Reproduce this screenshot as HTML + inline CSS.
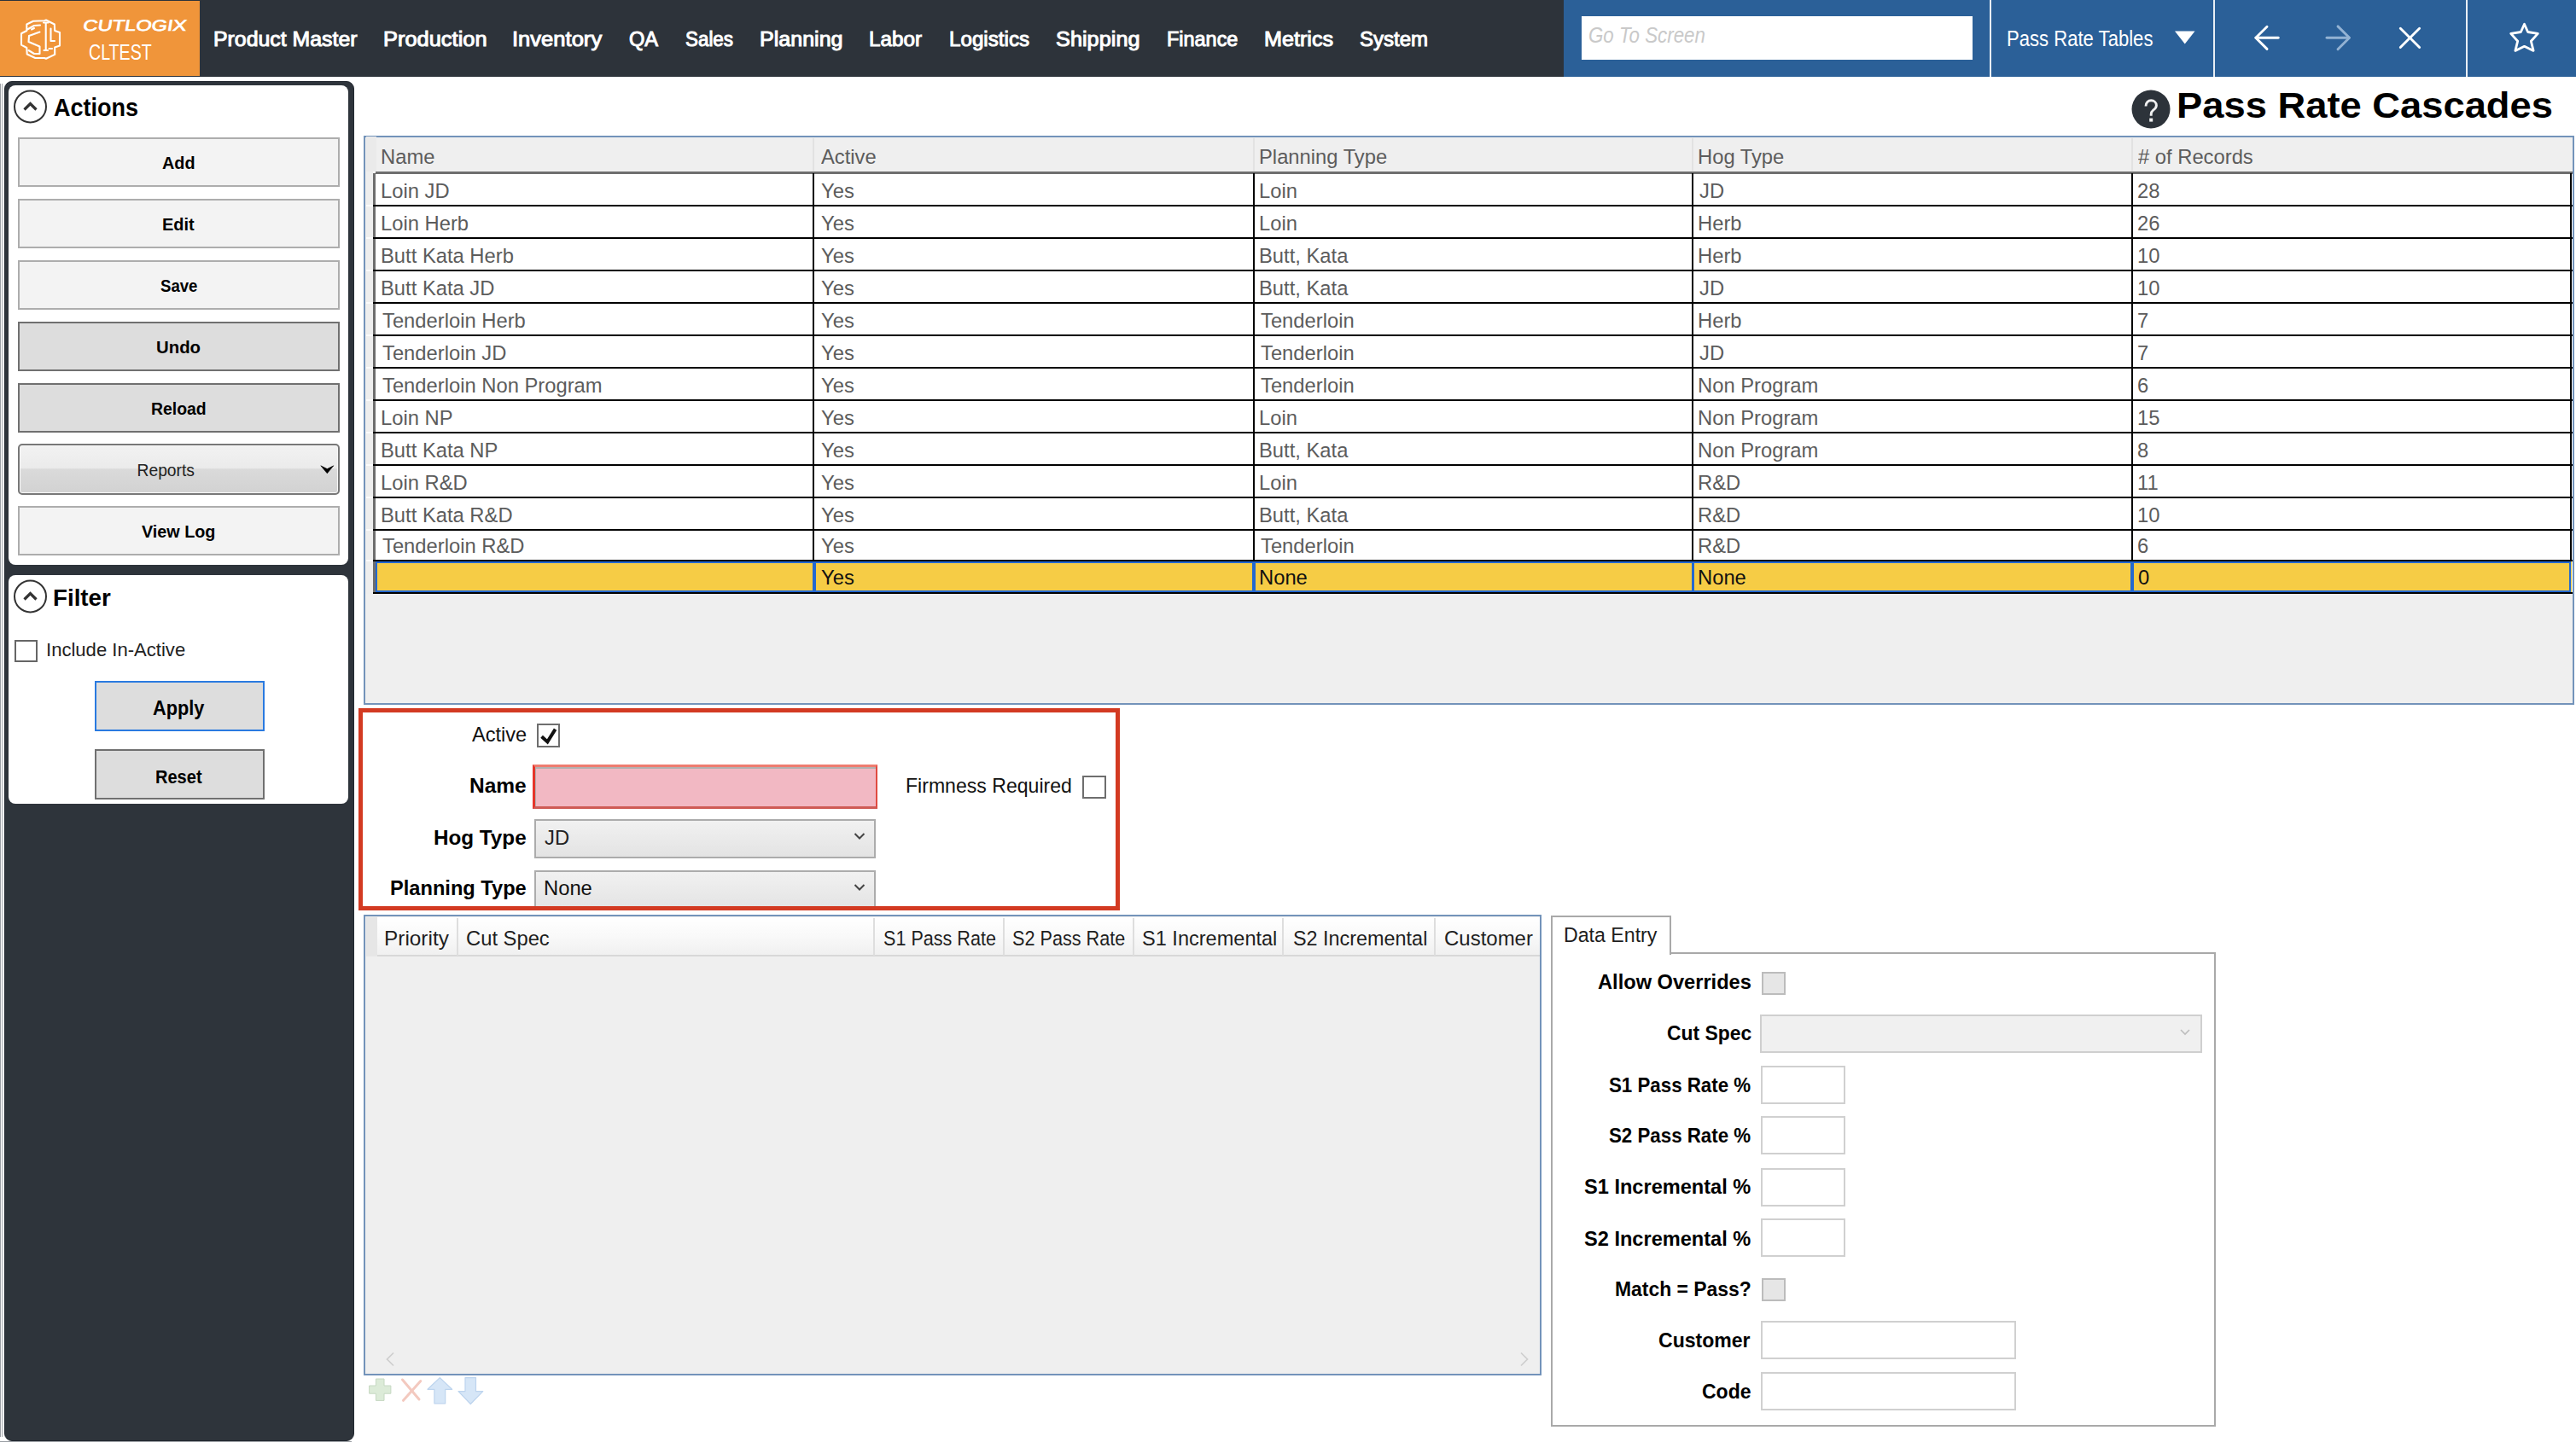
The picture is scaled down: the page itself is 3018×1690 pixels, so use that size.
<!DOCTYPE html>
<html><head><meta charset="utf-8"><style>
html,body{margin:0;padding:0;}
body{width:3018px;height:1690px;overflow:hidden;position:relative;background:#fff;font-family:"Liberation Sans", sans-serif;}
.a{position:absolute;box-sizing:border-box;}
.t{position:absolute;white-space:nowrap;line-height:1;transform-origin:0 0;}
</style></head><body>
<!-- window left lines -->
<div class="a" style="left:0;top:98px;width:1px;height:1586px;background:#9a9ea3"></div>
<div class="a" style="left:2px;top:98px;width:1px;height:1586px;background:#a4a8ad"></div>
<div class="a" style="left:0;top:1689px;width:412px;height:1px;background:#9a9ea3"></div>

<!-- NAV -->
<div class="a" style="left:0;top:0;width:3018px;height:90px;background:#2d333a"></div>
<div class="a" style="left:0;top:1px;width:234.3px;height:88px;background:#f0953a"></div>
<div class="a" style="left:1832px;top:0;width:1186px;height:90px;background:#2b6098"></div>
<div class="a" style="left:2331px;top:0;width:2px;height:90px;background:#e8eef5"></div>
<div class="a" style="left:2593px;top:0;width:2px;height:90px;background:#e8eef5"></div>
<div class="a" style="left:2889px;top:0;width:2px;height:90px;background:#e8eef5"></div>
<div class="a" style="left:1853px;top:19px;width:458px;height:51px;background:#fff"></div>
<!-- SIDEBAR -->
<div class="a" style="left:4.5px;top:94.5px;width:410px;height:1594px;background:#2e343b;border:1px solid #222830;border-radius:9px"></div>
<div class="a" style="left:10px;top:100px;width:398px;height:562px;background:#fff;border-radius:8px"></div>
<div class="a" style="left:10px;top:674px;width:398px;height:268px;background:#fff;border-radius:8px"></div>
<svg class="a" style="left:15px;top:105px" width="42" height="42" viewBox="0 0 42 42"><circle cx="20.5" cy="20" r="18.5" fill="none" stroke="#333" stroke-width="2"/><path d="M13.5 23.5 L20.5 16.5 L27.5 23.5" fill="none" stroke="#333" stroke-width="3.2"/></svg>
<svg class="a" style="left:15px;top:679px" width="42" height="42" viewBox="0 0 42 42"><circle cx="20.5" cy="20" r="18.5" fill="none" stroke="#333" stroke-width="2"/><path d="M13.5 23.5 L20.5 16.5 L27.5 23.5" fill="none" stroke="#333" stroke-width="3.2"/></svg>
<div class="a" style="left:21px;top:161px;width:377px;height:58px;background:#f3f3f3;border:2px solid #adadad"></div>
<div class="a" style="left:21px;top:233px;width:377px;height:58px;background:#f3f3f3;border:2px solid #adadad"></div>
<div class="a" style="left:21px;top:305px;width:377px;height:58px;background:#f3f3f3;border:2px solid #adadad"></div>
<div class="a" style="left:21px;top:377px;width:377px;height:58px;background:#dddddd;border:2px solid #707070"></div>
<div class="a" style="left:21px;top:449px;width:377px;height:58px;background:#dddddd;border:2px solid #707070"></div>
<div class="a" style="left:21px;top:520px;width:377px;height:60px;background:linear-gradient(#f2f2f2 0%,#ebebeb 47%,#dadada 50%,#d2d2d2 100%);border:2px solid #787878;border-radius:5px;box-shadow:inset 0 0 0 1px #f8f8f8"></div>
<svg class="a" style="left:374px;top:543px" width="18" height="14" viewBox="0 0 18 14"><path d="M1.8 2.8 L9.3 6.6 L16.8 2.8 L9.3 11.8 Z" fill="#000" stroke="#000" stroke-width="0.6" stroke-linejoin="miter"/></svg>
<div class="a" style="left:21px;top:593px;width:377px;height:58px;background:#f3f3f3;border:2px solid #adadad"></div>
<div class="a" style="left:17px;top:750px;width:27px;height:26px;background:#fff;border:2px solid #666"></div>
<div class="a" style="left:111px;top:798px;width:199px;height:59px;background:#dddddd;border:2px solid #2a7ae0"></div>
<div class="a" style="left:111px;top:878px;width:199px;height:59px;background:#dddddd;border:2px solid #707070"></div>

<!-- TITLE help -->
<svg class="a" style="left:2497px;top:105px" width="46" height="46" viewBox="0 0 46 46"><circle cx="23" cy="23" r="22.5" fill="#2d333a"/><path d="M17 19.5 C17 15.3 19.8 12.8 23.2 12.8 C26.8 12.8 29.4 15.3 29.4 18.5 C29.4 21.7 27.3 22.9 25.4 24.3 C23.8 25.5 23.2 26.6 23.2 29 L23.2 30.8" fill="none" stroke="#f0f0f0" stroke-width="2.9" stroke-linecap="butt"/><rect x="21.2" y="33.6" width="4" height="4" fill="#f0f0f0"/></svg>
<!-- UPPER GRID -->
<div class="a" style="left:426px;top:158.5px;width:2589.5px;height:667px;background:#efefef;border:2px solid #7393ba"></div>
<div class="a" style="left:428.5px;top:160px;width:12px;height:42px;background:#eaeaea"></div>
<div class="a" style="left:952px;top:162px;width:2px;height:38px;background:#e2e2e2"></div>
<div class="a" style="left:1468px;top:162px;width:2px;height:38px;background:#e2e2e2"></div>
<div class="a" style="left:1982px;top:162px;width:2px;height:38px;background:#e2e2e2"></div>
<div class="a" style="left:2497px;top:162px;width:2px;height:38px;background:#e2e2e2"></div>
<!-- rows block -->
<div class="a" style="left:437px;top:201px;width:2577px;height:495px;background:#fff"></div>
<div class="a" style="left:428px;top:201px;width:9px;height:495px;background:#eeeeee"></div>
<div class="a" style="left:440px;top:201px;width:2574px;height:3px;background:#6e6e6e"></div>
<div class="a" style="left:437px;top:203px;width:3px;height:493px;background:#6e6e6e"></div>
<div class="a" style="left:437px;top:240px;width:2577px;height:2px;background:#000"></div>
<div class="a" style="left:429px;top:240px;width:8px;height:2px;background:#fbfbfb"></div>
<div class="a" style="left:437px;top:278px;width:2577px;height:2px;background:#000"></div>
<div class="a" style="left:429px;top:278px;width:8px;height:2px;background:#fbfbfb"></div>
<div class="a" style="left:437px;top:316px;width:2577px;height:2px;background:#000"></div>
<div class="a" style="left:429px;top:316px;width:8px;height:2px;background:#fbfbfb"></div>
<div class="a" style="left:437px;top:354px;width:2577px;height:2px;background:#000"></div>
<div class="a" style="left:429px;top:354px;width:8px;height:2px;background:#fbfbfb"></div>
<div class="a" style="left:437px;top:392px;width:2577px;height:2px;background:#000"></div>
<div class="a" style="left:429px;top:392px;width:8px;height:2px;background:#fbfbfb"></div>
<div class="a" style="left:437px;top:430px;width:2577px;height:2px;background:#000"></div>
<div class="a" style="left:429px;top:430px;width:8px;height:2px;background:#fbfbfb"></div>
<div class="a" style="left:437px;top:468px;width:2577px;height:2px;background:#000"></div>
<div class="a" style="left:429px;top:468px;width:8px;height:2px;background:#fbfbfb"></div>
<div class="a" style="left:437px;top:506px;width:2577px;height:2px;background:#000"></div>
<div class="a" style="left:429px;top:506px;width:8px;height:2px;background:#fbfbfb"></div>
<div class="a" style="left:437px;top:544px;width:2577px;height:2px;background:#000"></div>
<div class="a" style="left:429px;top:544px;width:8px;height:2px;background:#fbfbfb"></div>
<div class="a" style="left:437px;top:582px;width:2577px;height:2px;background:#000"></div>
<div class="a" style="left:429px;top:582px;width:8px;height:2px;background:#fbfbfb"></div>
<div class="a" style="left:437px;top:620px;width:2577px;height:2px;background:#000"></div>
<div class="a" style="left:429px;top:620px;width:8px;height:2px;background:#fbfbfb"></div>
<div class="a" style="left:437px;top:656px;width:2577px;height:2px;background:#000"></div>
<div class="a" style="left:429px;top:656px;width:8px;height:2px;background:#fbfbfb"></div>
<div class="a" style="left:952px;top:203px;width:2px;height:493px;background:#000"></div>
<div class="a" style="left:1468px;top:203px;width:2px;height:493px;background:#000"></div>
<div class="a" style="left:1982px;top:203px;width:2px;height:493px;background:#000"></div>
<div class="a" style="left:2497px;top:203px;width:2px;height:493px;background:#000"></div>
<div class="a" style="left:3011px;top:203px;width:2px;height:493px;background:#000"></div>
<!-- yellow row -->
<div class="a" style="left:440px;top:658px;width:2573px;height:37px;background:#f6cc45"></div>
<div class="a" style="left:440px;top:658px;width:514px;height:36px;border:2px solid #2468d0"></div>
<div class="a" style="left:954px;top:658px;width:515px;height:36px;border:2px solid #2468d0"></div>
<div class="a" style="left:1469px;top:658px;width:515px;height:36px;border:2px solid #2468d0"></div>
<div class="a" style="left:1983px;top:658px;width:515px;height:36px;border:2px solid #2468d0"></div>
<div class="a" style="left:2498px;top:658px;width:514px;height:36px;border:2px solid #2468d0"></div>
<div class="a" style="left:437px;top:694px;width:2577px;height:2px;background:#000"></div>

<!-- FORM red box -->
<div class="a" style="left:420px;top:830px;width:892px;height:237px;border:5px solid #d33a22;background:#fff"></div>
<div class="a" style="left:628.5px;top:848px;width:27.5px;height:27.5px;background:#fff;border:2px solid #6e6e6e"></div>
<svg class="a" style="left:630px;top:850px" width="25" height="25" viewBox="0 0 25 25"><path d="M4.6 13.2 L11.4 19.4 L20.6 4.6" fill="none" stroke="#111" stroke-width="3.9" stroke-linejoin="miter" stroke-miterlimit="3"/></svg>
<div class="a" style="left:624px;top:896px;width:404px;height:51.5px;background:#f2b8c3;border-style:solid;border-width:3.5px 2.5px 3.5px 3px;border-color:#ee7c70 #e04a40 #cf5b56 #e5352a;box-shadow:inset 1px 2px 0 #b3b0b0"></div>
<div class="a" style="left:626px;top:960px;width:400px;height:46px;background:linear-gradient(#f1f1f1,#e3e3e3);border:2px solid #acacac"></div>
<svg class="a" style="left:999px;top:974px" width="16" height="12" viewBox="0 0 16 12"><path d="M2.5 3 L8 8.5 L13.5 3" fill="none" stroke="#444" stroke-width="2"/></svg>
<div class="a" style="left:626px;top:1020px;width:400px;height:46px;background:linear-gradient(#f1f1f1,#e3e3e3);border:2px solid #acacac;border-bottom:none"></div>
<svg class="a" style="left:999px;top:1034px" width="16" height="12" viewBox="0 0 16 12"><path d="M2.5 3 L8 8.5 L13.5 3" fill="none" stroke="#444" stroke-width="2"/></svg>
<div class="a" style="left:420px;top:1062px;width:892px;height:5px;background:#d33a22"></div>
<div class="a" style="left:1268px;top:908.5px;width:28px;height:27px;background:#fff;border:2px solid #6e6e6e"></div>

<!-- LOWER GRID -->
<div class="a" style="left:426px;top:1072px;width:1379.5px;height:539.5px;background:#efefef;border:2px solid #7393ba"></div>
<div class="a" style="left:428.5px;top:1074.5px;width:1375px;height:46px;background:linear-gradient(#ffffff 0%,#f9f9f9 50%,#f0f0f0 100%);border-bottom:2px solid #d8d8d8"></div>
<div class="a" style="left:428.5px;top:1074.5px;width:13px;height:46px;background:#e6e6e6"></div>
<div class="a" style="left:535px;top:1076px;width:2px;height:44px;background:#dedede"></div>
<div class="a" style="left:1023px;top:1076px;width:2px;height:44px;background:#dedede"></div>
<div class="a" style="left:1175px;top:1076px;width:2px;height:44px;background:#dedede"></div>
<div class="a" style="left:1327px;top:1076px;width:2px;height:44px;background:#dedede"></div>
<div class="a" style="left:1502px;top:1076px;width:2px;height:44px;background:#dedede"></div>
<div class="a" style="left:1680px;top:1076px;width:2px;height:44px;background:#dedede"></div>
<svg class="a" style="left:449px;top:1583px" width="16" height="20" viewBox="0 0 16 20"><path d="M12 2.5 L4.5 10 L12 17.5" fill="none" stroke="#cecece" stroke-width="1.7"/></svg>
<svg class="a" style="left:1778px;top:1583px" width="16" height="20" viewBox="0 0 16 20"><path d="M4 2.5 L11.5 10 L4 17.5" fill="none" stroke="#cecece" stroke-width="1.7"/></svg>
<!-- DATA ENTRY TAB -->
<div class="a" style="left:1816.5px;top:1116px;width:779px;height:556px;border:2px solid #a9a9a9;background:#fff"></div>
<div class="a" style="left:1816.5px;top:1072.5px;width:141px;height:46px;border:2px solid #a9a9a9;border-bottom:none;background:#fff"></div>
<div class="a" style="left:2064px;top:1138.5px;width:28px;height:27px;background:#e6e6e6;border:2px solid #bcbcbc"></div>
<div class="a" style="left:2062px;top:1188.5px;width:518px;height:45px;background:#f0f0f0;border:2px solid #cfcfcf"></div>
<svg class="a" style="left:2552px;top:1204px" width="16" height="12" viewBox="0 0 16 12"><path d="M3 3 L8 8 L13 3" fill="none" stroke="#bdbdbd" stroke-width="1.6"/></svg>
<div class="a" style="left:2062.5px;top:1248.5px;width:99px;height:45px;background:#fff;border:2px solid #d0d0d0"></div>
<div class="a" style="left:2062.5px;top:1308px;width:99px;height:45px;background:#fff;border:2px solid #d0d0d0"></div>
<div class="a" style="left:2062.5px;top:1368.5px;width:99px;height:45px;background:#fff;border:2px solid #d0d0d0"></div>
<div class="a" style="left:2062.5px;top:1428px;width:99px;height:45px;background:#fff;border:2px solid #d0d0d0"></div>
<div class="a" style="left:2064px;top:1498px;width:28px;height:27px;background:#e6e6e6;border:2px solid #bcbcbc"></div>
<div class="a" style="left:2062.5px;top:1548px;width:299px;height:45px;background:#fff;border:2px solid #d0d0d0"></div>
<div class="a" style="left:2062.5px;top:1608px;width:299px;height:45px;background:#fff;border:2px solid #d0d0d0"></div>

<!-- ICON OVERLAY -->
<svg class="a" style="left:0;top:0" width="3018" height="1690" viewBox="0 0 3018 1690">
  <!-- logo brain (local 60x60 at 18,16) -->
  <g transform="translate(18,16)" fill="none" stroke="#fff" stroke-width="2.1" stroke-linejoin="round" stroke-linecap="round">
    <path d="M21 8.7 L34 8.2 L36 7.5 L45.8 12.5 L46.2 20 L52 22 L52 37.5 L46.2 39.5 L46.2 47.9 L36 52.8 L34 52 L23.3 52 L13.7 47.5 L13.3 40 L7 36.6 L7 23.3 L13.3 20 L13.3 12.5 Z"/>
    <path d="M14 18.5 L22 14 L29 13.5"/>
    <path d="M28.5 21.5 L16 26 L15.5 33 L28.5 38.5 L28.5 47 L22 47 L15.5 43"/>
    <path d="M22 17 L19 18.5"/>
    <path d="M33 10.5 L38.5 10.5 M35.7 10.5 L35.7 43 M33.5 43 L38 43"/>
    <path d="M41.5 17.5 L41.5 32 L46 32"/>
    <path d="M39.5 41 L43 41"/>
  </g>
  <!-- nav triangle -->
  <path d="M2548 36.5 L2571.5 36.5 L2559.75 51.5 Z" fill="#fff"/>
  <!-- back arrow -->
  <g fill="none" stroke="#fff" stroke-width="2.9" stroke-linecap="round" stroke-linejoin="round">
    <path d="M2656 31.3 L2642.8 44.3 L2656 57.4"/><path d="M2643 44.3 L2669.2 44.3"/>
  </g>
  <g fill="none" stroke="#93b2d3" stroke-width="2.9" stroke-linecap="round" stroke-linejoin="round">
    <path d="M2739 30.9 L2752.5 44.3 L2739 57.8"/><path d="M2752 44.3 L2726 44.3"/>
  </g>
  <g fill="none" stroke="#fff" stroke-width="2.9" stroke-linecap="round">
    <path d="M2812.3 33.2 L2834.6 55.5"/><path d="M2834.6 33.2 L2812.3 55.5"/>
  </g>
  <path d="M2957.5 28.2 L2961.6 37.5 L2973.3 39.4 L2965.3 48.2 L2968.1 59.4 L2957.5 54.3 L2946.9 59.4 L2949.7 48.2 L2941.7 39.4 L2953.4 37.5 Z" fill="none" stroke="#fff" stroke-width="2.8" stroke-linejoin="round"/>
  <!-- toolbar icons -->
  <path d="M440.4 1616 L450 1616 L450 1624 L457.9 1624 L457.9 1633.2 L450 1633.2 L450 1641.4 L440.4 1641.4 L440.4 1633.2 L432.6 1633.2 L432.6 1624 L440.4 1624 Z" fill="#dcebd8" stroke="#c6d8c2" stroke-width="1"/>
  <g fill="none" stroke="#f3c9bf" stroke-width="3" stroke-linecap="round">
    <path d="M471.5 1617 L491 1640"/><path d="M492.8 1618.6 L472.5 1641.3"/>
  </g>
  <path d="M515.3 1614.6 L529.6 1628.3 L521.7 1628.3 L521.7 1644.8 L508.9 1644.8 L508.9 1628.3 L501 1628.3 Z" fill="#d6e6f7" stroke="#bdd4ee" stroke-width="1.2" stroke-linejoin="round"/>
  <path d="M545 1614.6 L557.5 1614.6 L557.5 1630.6 L565.8 1630.6 L551.3 1645.5 L537 1630.6 L545 1630.6 Z" fill="#d6e6f7" stroke="#bdd4ee" stroke-width="1.2" stroke-linejoin="round"/>
</svg>

<div class="t" style="left:249.57px;top:33.85px;font-size:24.2px;color:#fff;transform:scaleX(1.0274);-webkit-text-stroke:1px #fff;">Product Master</div>
<div class="t" style="left:448.95px;top:33.85px;font-size:24.2px;color:#fff;transform:scaleX(1.0514);-webkit-text-stroke:1px #fff;">Production</div>
<div class="t" style="left:599.89px;top:33.85px;font-size:24.2px;color:#fff;transform:scaleX(1.0570);-webkit-text-stroke:1px #fff;">Inventory</div>
<div class="t" style="left:737.02px;top:33.85px;font-size:24.2px;color:#fff;transform:scaleX(0.9766);-webkit-text-stroke:1px #fff;">QA</div>
<div class="t" style="left:803.07px;top:33.85px;font-size:24.2px;color:#fff;transform:scaleX(0.9258);-webkit-text-stroke:1px #fff;">Sales</div>
<div class="t" style="left:889.96px;top:33.85px;font-size:24.2px;color:#fff;transform:scaleX(1.0361);-webkit-text-stroke:1px #fff;">Planning</div>
<div class="t" style="left:1018.00px;top:33.85px;font-size:24.2px;color:#fff;transform:scaleX(1.0032);-webkit-text-stroke:1px #fff;">Labor</div>
<div class="t" style="left:1112.00px;top:33.85px;font-size:24.2px;color:#fff;-webkit-text-stroke:1px #fff;">Logistics</div>
<div class="t" style="left:1236.95px;top:33.85px;font-size:24.2px;color:#fff;transform:scaleX(1.0470);-webkit-text-stroke:1px #fff;">Shipping</div>
<div class="t" style="left:1367.03px;top:33.85px;font-size:24.2px;color:#fff;transform:scaleX(0.9693);-webkit-text-stroke:1px #fff;">Finance</div>
<div class="t" style="left:1480.96px;top:33.85px;font-size:24.2px;color:#fff;transform:scaleX(1.0411);-webkit-text-stroke:1px #fff;">Metrics</div>
<div class="t" style="left:1593.01px;top:33.85px;font-size:24.2px;color:#fff;transform:scaleX(0.9937);-webkit-text-stroke:1px #fff;">System</div>
<div class="t" style="left:99.30px;top:20.90px;font-size:18px;color:#fff;transform:scaleX(1.3151) skewX(-7deg);-webkit-text-stroke:0.7px #fff;">CUTLOGIX</div>
<div class="t" style="left:104.25px;top:48.33px;font-size:26px;color:#fff;transform:scaleX(0.7536);">CLTEST</div>
<div class="t" style="left:1861.12px;top:28.84px;font-size:25.4px;color:#c9c9c9;font-style:italic;transform:scaleX(0.8789);">Go To Screen</div>
<div class="t" style="left:2350.76px;top:32.84px;font-size:25.4px;color:#fff;transform:scaleX(0.8697);">Pass Rate Tables</div>
<div class="t" style="left:63.40px;top:111.99px;font-size:29px;color:#000;font-weight:bold;transform:scaleX(0.9314);">Actions</div>
<div class="t" style="left:62.40px;top:686.80px;font-size:27.8px;color:#000;font-weight:bold;transform:scaleX(0.9979);">Filter</div>
<div class="t" style="left:190.00px;top:181.10px;font-size:20.6px;color:#000;font-weight:bold;transform:scaleX(0.9632);">Add</div>
<div class="t" style="left:190.43px;top:253.20px;font-size:20.6px;color:#000;font-weight:bold;transform:scaleX(0.9675);">Edit</div>
<div class="t" style="left:187.90px;top:325.40px;font-size:20.6px;color:#000;font-weight:bold;transform:scaleX(0.9026);">Save</div>
<div class="t" style="left:183.01px;top:397.30px;font-size:20.6px;color:#000;font-weight:bold;transform:scaleX(0.9896);">Undo</div>
<div class="t" style="left:176.56px;top:469.40px;font-size:20.6px;color:#000;font-weight:bold;transform:scaleX(0.9422);">Reload</div>
<div class="t" style="left:166.40px;top:612.50px;font-size:20.6px;color:#000;font-weight:bold;transform:scaleX(0.9604);">View Log</div>
<div class="t" style="left:160.50px;top:541.50px;font-size:19.3px;color:#222;">Reports</div>
<div class="t" style="left:53.78px;top:751.49px;font-size:21.8px;color:#222;transform:scaleX(1.0125);">Include In-Active</div>
<div class="t" style="left:179.00px;top:818.77px;font-size:23px;color:#000;font-weight:bold;transform:scaleX(0.9454);">Apply</div>
<div class="t" style="left:181.72px;top:899.12px;font-size:22.7px;color:#000;font-weight:bold;transform:scaleX(0.8834);">Reset</div>
<div class="t" style="left:2550.33px;top:103.33px;font-size:41.7px;color:#000;font-weight:bold;transform:scaleX(1.0873);">Pass Rate Cascades</div>
<div class="t" style="left:446.36px;top:171.60px;font-size:24.5px;color:#5c5c5c;transform:scaleX(0.9700);">Name</div>
<div class="t" style="left:962.10px;top:171.60px;font-size:24.5px;color:#5c5c5c;transform:scaleX(0.9700);">Active</div>
<div class="t" style="left:1474.86px;top:171.60px;font-size:24.5px;color:#5c5c5c;transform:scaleX(0.9700);">Planning Type</div>
<div class="t" style="left:1989.06px;top:171.60px;font-size:24.5px;color:#5c5c5c;transform:scaleX(0.9700);">Hog Type</div>
<div class="t" style="left:2505.40px;top:171.60px;font-size:24.5px;color:#5c5c5c;transform:scaleX(0.9700);"># of Records</div>
<div class="t" style="left:446.36px;top:211.60px;font-size:24.5px;color:#5c5c5c;transform:scaleX(0.9700);">Loin JD</div>
<div class="t" style="left:962.10px;top:211.60px;font-size:24.5px;color:#5c5c5c;transform:scaleX(0.9700);">Yes</div>
<div class="t" style="left:1474.86px;top:211.60px;font-size:24.5px;color:#5c5c5c;transform:scaleX(0.9700);">Loin</div>
<div class="t" style="left:1991.00px;top:211.60px;font-size:24.5px;color:#5c5c5c;transform:scaleX(0.9700);">JD</div>
<div class="t" style="left:2504.43px;top:211.60px;font-size:24.5px;color:#5c5c5c;transform:scaleX(0.9700);">28</div>
<div class="t" style="left:446.36px;top:249.60px;font-size:24.5px;color:#5c5c5c;transform:scaleX(0.9700);">Loin Herb</div>
<div class="t" style="left:962.10px;top:249.60px;font-size:24.5px;color:#5c5c5c;transform:scaleX(0.9700);">Yes</div>
<div class="t" style="left:1474.86px;top:249.60px;font-size:24.5px;color:#5c5c5c;transform:scaleX(0.9700);">Loin</div>
<div class="t" style="left:1989.06px;top:249.60px;font-size:24.5px;color:#5c5c5c;transform:scaleX(0.9700);">Herb</div>
<div class="t" style="left:2504.43px;top:249.60px;font-size:24.5px;color:#5c5c5c;transform:scaleX(0.9700);">26</div>
<div class="t" style="left:446.36px;top:287.60px;font-size:24.5px;color:#5c5c5c;transform:scaleX(0.9700);">Butt Kata Herb</div>
<div class="t" style="left:962.10px;top:287.60px;font-size:24.5px;color:#5c5c5c;transform:scaleX(0.9700);">Yes</div>
<div class="t" style="left:1474.86px;top:287.60px;font-size:24.5px;color:#5c5c5c;transform:scaleX(0.9700);">Butt, Kata</div>
<div class="t" style="left:1989.06px;top:287.60px;font-size:24.5px;color:#5c5c5c;transform:scaleX(0.9700);">Herb</div>
<div class="t" style="left:2504.43px;top:287.60px;font-size:24.5px;color:#5c5c5c;transform:scaleX(0.9700);">10</div>
<div class="t" style="left:446.36px;top:325.60px;font-size:24.5px;color:#5c5c5c;transform:scaleX(0.9700);">Butt Kata JD</div>
<div class="t" style="left:962.10px;top:325.60px;font-size:24.5px;color:#5c5c5c;transform:scaleX(0.9700);">Yes</div>
<div class="t" style="left:1474.86px;top:325.60px;font-size:24.5px;color:#5c5c5c;transform:scaleX(0.9700);">Butt, Kata</div>
<div class="t" style="left:1991.00px;top:325.60px;font-size:24.5px;color:#5c5c5c;transform:scaleX(0.9700);">JD</div>
<div class="t" style="left:2504.43px;top:325.60px;font-size:24.5px;color:#5c5c5c;transform:scaleX(0.9700);">10</div>
<div class="t" style="left:448.30px;top:363.60px;font-size:24.5px;color:#5c5c5c;transform:scaleX(0.9700);">Tenderloin Herb</div>
<div class="t" style="left:962.10px;top:363.60px;font-size:24.5px;color:#5c5c5c;transform:scaleX(0.9700);">Yes</div>
<div class="t" style="left:1476.80px;top:363.60px;font-size:24.5px;color:#5c5c5c;transform:scaleX(0.9700);">Tenderloin</div>
<div class="t" style="left:1989.06px;top:363.60px;font-size:24.5px;color:#5c5c5c;transform:scaleX(0.9700);">Herb</div>
<div class="t" style="left:2504.43px;top:363.60px;font-size:24.5px;color:#5c5c5c;transform:scaleX(0.9700);">7</div>
<div class="t" style="left:448.30px;top:401.60px;font-size:24.5px;color:#5c5c5c;transform:scaleX(0.9700);">Tenderloin JD</div>
<div class="t" style="left:962.10px;top:401.60px;font-size:24.5px;color:#5c5c5c;transform:scaleX(0.9700);">Yes</div>
<div class="t" style="left:1476.80px;top:401.60px;font-size:24.5px;color:#5c5c5c;transform:scaleX(0.9700);">Tenderloin</div>
<div class="t" style="left:1991.00px;top:401.60px;font-size:24.5px;color:#5c5c5c;transform:scaleX(0.9700);">JD</div>
<div class="t" style="left:2504.43px;top:401.60px;font-size:24.5px;color:#5c5c5c;transform:scaleX(0.9700);">7</div>
<div class="t" style="left:448.30px;top:439.60px;font-size:24.5px;color:#5c5c5c;transform:scaleX(0.9700);">Tenderloin Non Program</div>
<div class="t" style="left:962.10px;top:439.60px;font-size:24.5px;color:#5c5c5c;transform:scaleX(0.9700);">Yes</div>
<div class="t" style="left:1476.80px;top:439.60px;font-size:24.5px;color:#5c5c5c;transform:scaleX(0.9700);">Tenderloin</div>
<div class="t" style="left:1989.06px;top:439.60px;font-size:24.5px;color:#5c5c5c;transform:scaleX(0.9700);">Non Program</div>
<div class="t" style="left:2504.43px;top:439.60px;font-size:24.5px;color:#5c5c5c;transform:scaleX(0.9700);">6</div>
<div class="t" style="left:446.36px;top:477.60px;font-size:24.5px;color:#5c5c5c;transform:scaleX(0.9700);">Loin NP</div>
<div class="t" style="left:962.10px;top:477.60px;font-size:24.5px;color:#5c5c5c;transform:scaleX(0.9700);">Yes</div>
<div class="t" style="left:1474.86px;top:477.60px;font-size:24.5px;color:#5c5c5c;transform:scaleX(0.9700);">Loin</div>
<div class="t" style="left:1989.06px;top:477.60px;font-size:24.5px;color:#5c5c5c;transform:scaleX(0.9700);">Non Program</div>
<div class="t" style="left:2504.43px;top:477.60px;font-size:24.5px;color:#5c5c5c;transform:scaleX(0.9700);">15</div>
<div class="t" style="left:446.36px;top:515.60px;font-size:24.5px;color:#5c5c5c;transform:scaleX(0.9700);">Butt Kata NP</div>
<div class="t" style="left:962.10px;top:515.60px;font-size:24.5px;color:#5c5c5c;transform:scaleX(0.9700);">Yes</div>
<div class="t" style="left:1474.86px;top:515.60px;font-size:24.5px;color:#5c5c5c;transform:scaleX(0.9700);">Butt, Kata</div>
<div class="t" style="left:1989.06px;top:515.60px;font-size:24.5px;color:#5c5c5c;transform:scaleX(0.9700);">Non Program</div>
<div class="t" style="left:2504.43px;top:515.60px;font-size:24.5px;color:#5c5c5c;transform:scaleX(0.9700);">8</div>
<div class="t" style="left:446.36px;top:553.60px;font-size:24.5px;color:#5c5c5c;transform:scaleX(0.9700);">Loin R&amp;D</div>
<div class="t" style="left:962.10px;top:553.60px;font-size:24.5px;color:#5c5c5c;transform:scaleX(0.9700);">Yes</div>
<div class="t" style="left:1474.86px;top:553.60px;font-size:24.5px;color:#5c5c5c;transform:scaleX(0.9700);">Loin</div>
<div class="t" style="left:1989.06px;top:553.60px;font-size:24.5px;color:#5c5c5c;transform:scaleX(0.9700);">R&amp;D</div>
<div class="t" style="left:2504.43px;top:553.60px;font-size:24.5px;color:#5c5c5c;transform:scaleX(0.9700);">11</div>
<div class="t" style="left:446.36px;top:591.60px;font-size:24.5px;color:#5c5c5c;transform:scaleX(0.9700);">Butt Kata R&amp;D</div>
<div class="t" style="left:962.10px;top:591.60px;font-size:24.5px;color:#5c5c5c;transform:scaleX(0.9700);">Yes</div>
<div class="t" style="left:1474.86px;top:591.60px;font-size:24.5px;color:#5c5c5c;transform:scaleX(0.9700);">Butt, Kata</div>
<div class="t" style="left:1989.06px;top:591.60px;font-size:24.5px;color:#5c5c5c;transform:scaleX(0.9700);">R&amp;D</div>
<div class="t" style="left:2504.43px;top:591.60px;font-size:24.5px;color:#5c5c5c;transform:scaleX(0.9700);">10</div>
<div class="t" style="left:448.30px;top:627.60px;font-size:24.5px;color:#5c5c5c;transform:scaleX(0.9700);">Tenderloin R&amp;D</div>
<div class="t" style="left:962.10px;top:627.60px;font-size:24.5px;color:#5c5c5c;transform:scaleX(0.9700);">Yes</div>
<div class="t" style="left:1476.80px;top:627.60px;font-size:24.5px;color:#5c5c5c;transform:scaleX(0.9700);">Tenderloin</div>
<div class="t" style="left:1989.06px;top:627.60px;font-size:24.5px;color:#5c5c5c;transform:scaleX(0.9700);">R&amp;D</div>
<div class="t" style="left:2504.43px;top:627.60px;font-size:24.5px;color:#5c5c5c;transform:scaleX(0.9700);">6</div>
<div class="t" style="left:962.10px;top:665.00px;font-size:24.5px;color:#111;transform:scaleX(0.9700);">Yes</div>
<div class="t" style="left:1474.86px;top:665.00px;font-size:24.5px;color:#111;transform:scaleX(0.9700);">None</div>
<div class="t" style="left:1989.06px;top:665.00px;font-size:24.5px;color:#111;transform:scaleX(0.9700);">None</div>
<div class="t" style="left:2505.40px;top:665.00px;font-size:24.5px;color:#111;transform:scaleX(0.9700);">0</div>
<div class="t" style="left:552.60px;top:849.20px;font-size:24.5px;color:#111;transform:scaleX(0.9623);">Active</div>
<div class="t" style="left:550.00px;top:909.10px;font-size:24.5px;color:#000;font-weight:bold;">Name</div>
<div class="t" style="left:508.01px;top:969.60px;font-size:24.5px;color:#000;font-weight:bold;transform:scaleX(0.9892);">Hog Type</div>
<div class="t" style="left:456.84px;top:1029.00px;font-size:24.5px;color:#000;font-weight:bold;transform:scaleX(0.9647);">Planning Type</div>
<div class="t" style="left:1060.72px;top:909.00px;font-size:24.5px;color:#111;transform:scaleX(0.9416);">Firmness Required</div>
<div class="t" style="left:638.30px;top:969.60px;font-size:24.5px;color:#222;transform:scaleX(0.9700);">JD</div>
<div class="t" style="left:637.46px;top:1029.00px;font-size:24.5px;color:#111;transform:scaleX(0.9700);">None</div>
<div class="t" style="left:450.41px;top:1088.20px;font-size:24.5px;color:#1e1e1e;transform:scaleX(0.9950);">Priority</div>
<div class="t" style="left:545.83px;top:1088.20px;font-size:24.5px;color:#1e1e1e;transform:scaleX(0.9700);">Cut Spec</div>
<div class="t" style="left:1035.12px;top:1088.20px;font-size:24.5px;color:#1e1e1e;transform:scaleX(0.8807);">S1 Pass Rate</div>
<div class="t" style="left:1186.12px;top:1088.20px;font-size:24.5px;color:#1e1e1e;transform:scaleX(0.8827);">S2 Pass Rate</div>
<div class="t" style="left:1337.54px;top:1088.20px;font-size:24.5px;color:#1e1e1e;transform:scaleX(0.9610);">S1 Incremental</div>
<div class="t" style="left:1515.05px;top:1088.20px;font-size:24.5px;color:#1e1e1e;transform:scaleX(0.9548);">S2 Incremental</div>
<div class="t" style="left:1691.52px;top:1088.20px;font-size:24.5px;color:#1e1e1e;transform:scaleX(0.9787);">Customer</div>
<div class="t" style="left:1831.51px;top:1083.60px;font-size:24.5px;color:#1e1e1e;transform:scaleX(0.9451);">Data Entry</div>
<div class="t" style="left:1872.00px;top:1139.00px;font-size:24.5px;color:#000;font-weight:bold;transform:scaleX(0.9644);">Allow Overrides</div>
<div class="t" style="left:1952.77px;top:1198.80px;font-size:24.5px;color:#000;font-weight:bold;transform:scaleX(0.9335);">Cut Spec</div>
<div class="t" style="left:1885.00px;top:1259.60px;font-size:24.5px;color:#000;font-weight:bold;transform:scaleX(0.9102);">S1 Pass Rate %</div>
<div class="t" style="left:1885.00px;top:1319.40px;font-size:24.5px;color:#000;font-weight:bold;transform:scaleX(0.9102);">S2 Pass Rate %</div>
<div class="t" style="left:1855.80px;top:1379.40px;font-size:24.5px;color:#000;font-weight:bold;transform:scaleX(0.9626);">S1 Incremental %</div>
<div class="t" style="left:1855.80px;top:1439.60px;font-size:24.5px;color:#000;font-weight:bold;transform:scaleX(0.9626);">S2 Incremental %</div>
<div class="t" style="left:1892.36px;top:1498.90px;font-size:24.5px;color:#000;font-weight:bold;transform:scaleX(0.9353);">Match = Pass?</div>
<div class="t" style="left:1943.36px;top:1558.60px;font-size:24.5px;color:#000;font-weight:bold;transform:scaleX(0.9401);">Customer</div>
<div class="t" style="left:1994.36px;top:1619.00px;font-size:24.5px;color:#000;font-weight:bold;transform:scaleX(0.9392);">Code</div>
</body></html>
